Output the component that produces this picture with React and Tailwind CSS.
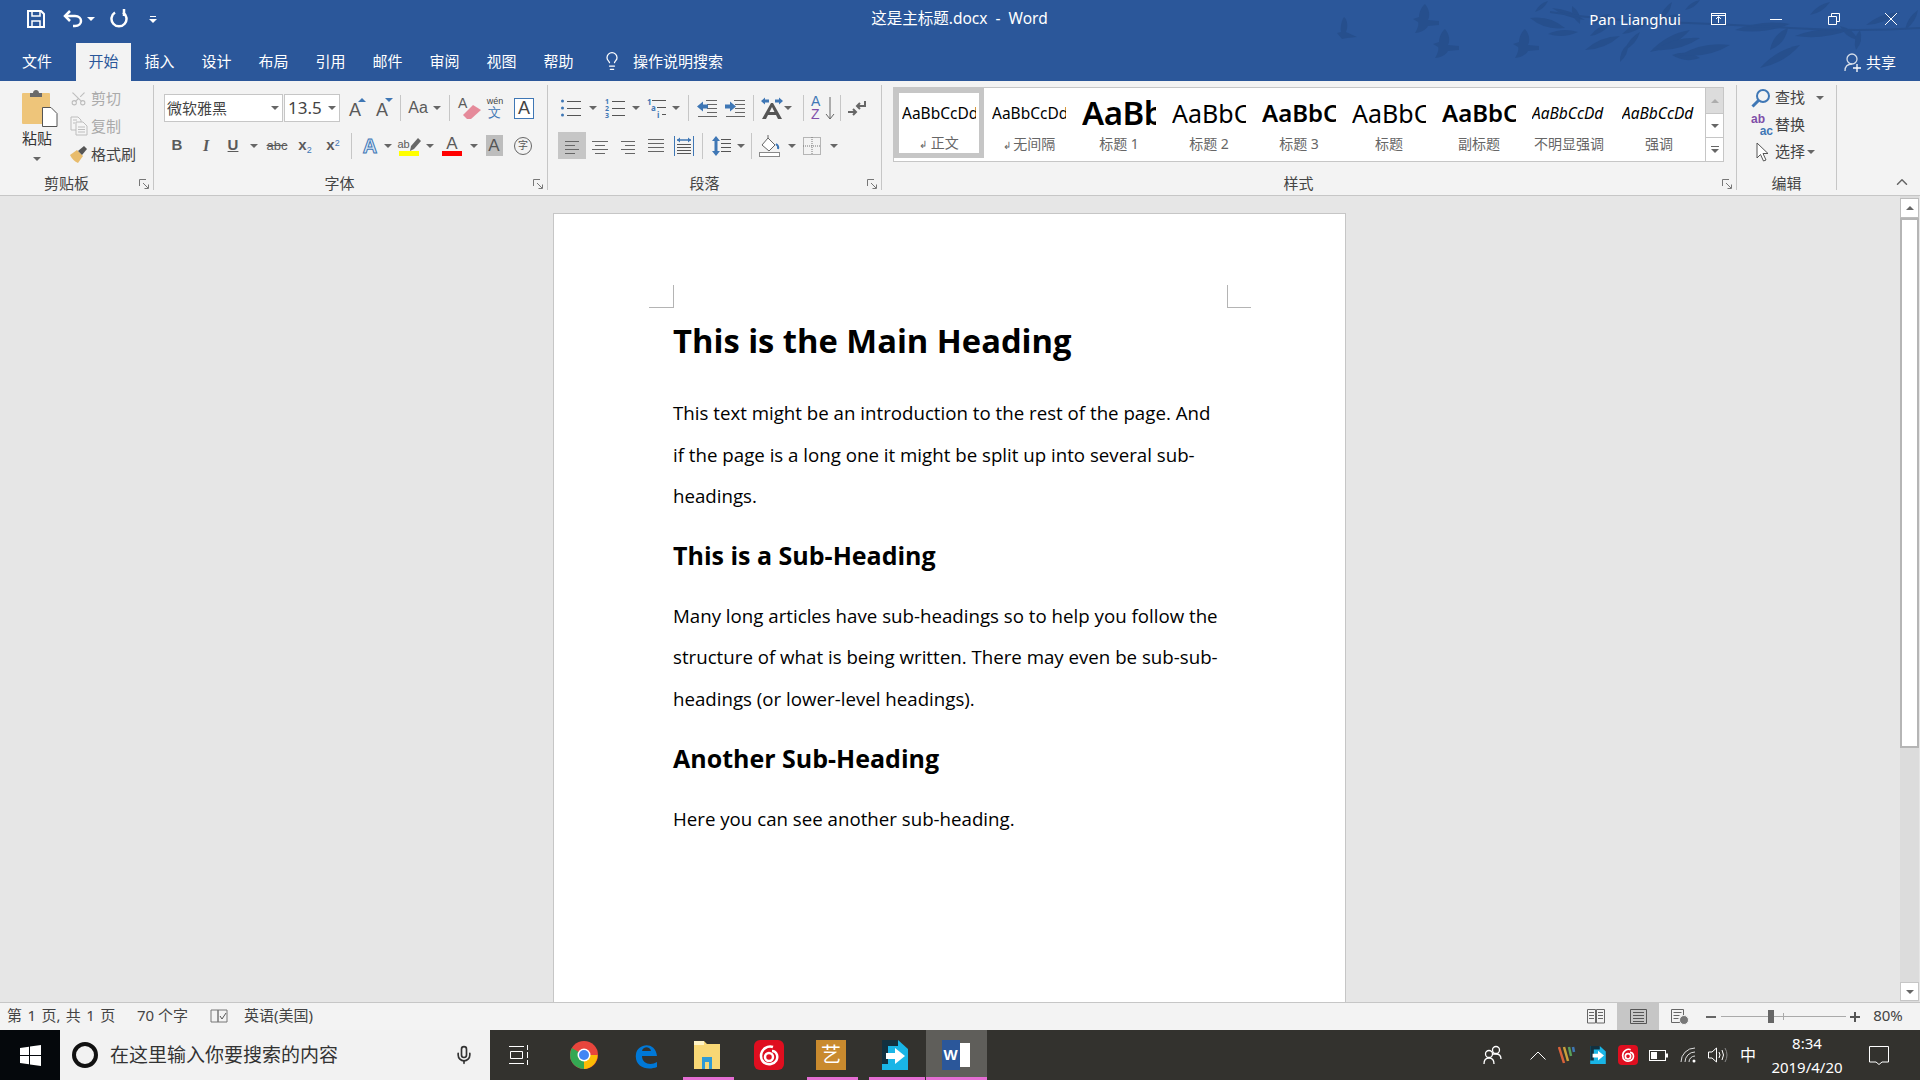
import clsx from 'clsx'
import { Scissors, Mic, ChevronUp, Lightbulb } from 'lucide-react'

const TABS = ['插入', '设计', '布局', '引用', '邮件', '审阅', '视图', '帮助']

const STYLES = [
  { label: '无间隔', mark: true, cls: 'text-[15.5px]' },
  { label: '标题 1', cls: 'text-[33px] font-semibold tracking-[-0.5px]' },
  { label: '标题 2', cls: 'text-[25px]' },
  { label: '标题 3', cls: 'text-[24px] font-semibold' },
  { label: '标题', cls: 'text-[25px]' },
  { label: '副标题', cls: 'text-[24px] font-semibold' },
  { label: '不明显强调', cls: 'text-[15.5px] italic text-[#666]' },
  { label: '强调', cls: 'text-[15.5px] italic' },
]

const LEAVES = [
  [1530, 18, 1565, 28, 8], [1535, 12, 1548, 1, 4], [1552, 8, 1585, 20, 5], [1572, 6, 1580, 24, 6],
  [1610, 24, 1590, 36, 5], [1578, 32, 1548, 34, 6], [1590, 24, 1610, 14, 5], [1620, 36, 1585, 50, 7],
  [1622, 34, 1650, 20, 6], [1640, 32, 1625, 50, 5], [1652, 26, 1680, 14, 6], [1660, 20, 1672, 2, 5],
  [1685, 10, 1700, 0, 4], [1690, 30, 1650, 52, 8], [1700, 38, 1655, 50, 8], [1628, 44, 1620, 62, 5],
  [1735, 30, 1790, 24, 8], [1788, 28, 1770, 50, 8], [1795, 36, 1850, 30, 7], [1800, 45, 1760, 68, 8],
  [1810, 15, 1830, 2, 5], [1840, 26, 1858, 40, 6], [1866, 25, 1900, 12, 6], [1860, 30, 1856, 50, 6],
  [1700, 58, 1672, 55, 7], [1730, 45, 1680, 55, 9], [1905, 30, 1918, 10, 5],
]

function leafPath([x1, y1, x2, y2, w]) {
  const mx = (x1 + x2) / 2
  const my = (y1 + y2) / 2
  const dx = x2 - x1
  const dy = y2 - y1
  const len = Math.hypot(dx, dy)
  const nx = (-dy / len) * w
  const ny = (dx / len) * w
  return `M${x1} ${y1}Q${mx + nx} ${my + ny} ${x2} ${y2}Q${mx - nx} ${my - ny} ${x1} ${y1}Z`
}

function Bird({ x, y }) {
  return (
    <path
      transform={`translate(${x} ${y})`}
      d="M12 0C17 6 17 12 15 16L26 17L26 21L15 22C13 26 7 29 2 29C5 24 6 20 5 18L0 15L6 13C6 8 9 2 12 0Z"
    />
  )
}

function Caret({ className, light }) {
  return (
    <span
      className={clsx(
        'inline-block h-0 w-0 shrink-0 border-x-[4px] border-t-[4px] border-x-transparent',
        light ? 'border-t-white' : 'border-t-[#666]',
        className,
      )}
    />
  )
}

function Cell({ className, children }) {
  return <div className={clsx('flex h-full shrink-0 items-center justify-center', className)}>{children}</div>
}

function Sep({ className }) {
  return <div className={clsx('h-[26px] w-px shrink-0 self-center bg-[#c6c6c6]', className)} />
}

function Launcher() {
  return (
    <svg className="absolute bottom-[1px] right-[4px]" width="10" height="10" viewBox="0 0 10 10" fill="none" stroke="#777">
      <path d="M0.5 7V0.5H7" />
      <path d="M4 4L9 9M5.5 9.5H9.5V5.5" />
    </svg>
  )
}

function GroupLabel({ className, children }) {
  return <div className={clsx('mt-auto text-center text-[15px] leading-[14px] text-[#444]', className)}>{children}</div>
}

function Lines({ rows, width = 22, aligned = 'left' }) {
  return (
    <svg width={width} height="16" viewBox={`0 0 ${width} 16`} stroke="#666">
      {rows.map(([w, y], i) => {
        const x = aligned === 'center' ? (width - w) / 2 : aligned === 'right' ? width - w : 0
        return <line key={i} x1={x} x2={x + w} y1={y + 0.5} y2={y + 0.5} />
      })}
    </svg>
  )
}

function BulletList() {
  return (
    <svg width="22" height="20" viewBox="0 0 22 20" stroke="#555">
      <path d="M6 3.5H20M6 10.5H20M6 17.5H20" />
      <circle cx="1.5" cy="3" r="1.5" fill="#3f77b5" stroke="none" />
      <circle cx="1.5" cy="10" r="1.5" fill="#3f77b5" stroke="none" />
      <circle cx="1.5" cy="17" r="1.5" fill="#3f77b5" stroke="none" />
    </svg>
  )
}

function NumList() {
  return (
    <div className="relative h-[20px] w-[20px] text-[7px] leading-[7px] font-bold text-[#3f77b5]">
      <svg className="absolute inset-0" width="20" height="20" viewBox="0 0 20 20" stroke="#555">
        <path d="M7 3.5H20M7 10.5H20M7 17.5H20" />
      </svg>
      <span className="absolute left-0 top-0">1</span>
      <span className="absolute left-0 top-[7px]">2</span>
      <span className="absolute left-0 top-[14px]">3</span>
    </div>
  )
}

function MultiList() {
  return (
    <div className="relative h-[20px] w-[20px] text-[8px] leading-[8px] font-bold text-[#3f77b5]">
      <svg className="absolute inset-0" width="20" height="20" viewBox="0 0 20 20" stroke="#555">
        <path d="M5 2.5H19M10 9.5H19M15 16.5H19" />
      </svg>
      <span className="absolute left-0 top-0">1</span>
      <span className="absolute left-[4px] top-[6px]">a</span>
      <span className="absolute left-[10px] top-[13px]">i</span>
    </div>
  )
}

function IndentIcon({ out }) {
  return (
    <svg width="20" height="18" viewBox="0 0 20 18">
      <path d="M9 1.5H20M10 5.5H20M10 9.5H20M10 13.5H20M1 17.5H20" stroke="#666" fill="none" />
      <path d={out ? 'M0 7.5L6 2.5V5.5H11V9.5H6V12.5Z' : 'M11 7.5L5 2.5V5.5H0V9.5H5V12.5Z'} fill="#3f77b5" />
    </svg>
  )
}

function PasteIcon() {
  return (
    <svg width="36" height="38" viewBox="0 0 36 38">
      <rect x="0" y="4" width="28" height="31" rx="1" fill="#eec57a" />
      <path d="M8 8V4H11C11 0 17 0 17 4H20V8Z" fill="#6a6a6a" />
      <path d="M20.5 18.5H29L35 24.5V37.5H20.5Z" fill="#fff" stroke="#555" />
    </svg>
  )
}

function CopyIcon() {
  return (
    <svg width="18" height="20" viewBox="0 0 18 20" fill="#f5f5f5" stroke="#bdbdbd">
      <path d="M1 1H8L11 4V14H1Z" />
      <path d="M6 6H13L17 10V19H6Z" />
      <path d="M8 11H15M8 13.5H15M8 16H15M3 4H7M3 7H5" />
    </svg>
  )
}

function BrushIcon() {
  return (
    <svg width="18" height="18" viewBox="0 0 18 18">
      <path d="M0 10L7 5L13 11L8 18Q3 16 0 10Z" fill="#e8bc6c" />
      <path d="M8 6L14 1L17 4L12 10Z" fill="#555" />
    </svg>
  )
}

function LetterA({ children, className }) {
  return <span className={clsx("font-['Liberation_Sans',sans-serif] text-[#5a5a5a]", className)}>{children}</span>
}

function GrowShrink({ up }) {
  return (
    <div className="relative h-[22px] w-[22px] text-center">
      <LetterA className="text-[18px] leading-[26px]">A</LetterA>
      <svg className="absolute right-0 top-0" width="8" height="6" viewBox="0 0 8 6" fill="#3f77b5">
        <path d={up ? 'M0 5L4 1L8 5Z' : 'M0 1H8L4 5Z'} />
      </svg>
    </div>
  )
}

function LayoutIcon() {
  return (
    <svg width="24" height="24" viewBox="0 0 24 24">
      <path d="M1 5L5 1.5V3.5H9V6.5H5V8.5ZM23 5L19 1.5V3.5H15V6.5H19V8.5Z" fill="#3f77b5" />
      <path d="M2 23L11 7H13L22 23H18L16 19H8L6 23ZM9.5 16H14.5L12 11Z" fill="#555" />
    </svg>
  )
}

function SortIcon() {
  return (
    <div className="relative h-[26px] w-[24px] font-['Liberation_Sans',sans-serif] text-[14px] leading-[13px]">
      <span className="absolute left-0 top-0 text-[#3f77b5]">A</span>
      <span className="absolute left-0 top-[13px] text-[#7f4ea8]">Z</span>
      <svg className="absolute right-0 top-0" width="10" height="26" viewBox="0 0 10 26" fill="none" stroke="#666">
        <path d="M5 2V24M1 19L5 24L9 19" />
      </svg>
    </div>
  )
}

function PilcrowIcon() {
  return (
    <svg width="18" height="18" viewBox="0 0 18 18" fill="none" stroke="#666" strokeWidth="2">
      <path d="M17 2V7H9M12 4L9 7L12 10" />
      <path d="M0 13H8M5 10L8 13L5 16" />
    </svg>
  )
}

function DistributeIcon() {
  return (
    <svg width="20" height="20" viewBox="0 0 20 20">
      <path d="M0.5 0V20M19.5 0V20" stroke="#3f77b5" />
      <path d="M3 4H17" stroke="#3f77b5" strokeWidth="1.5" />
      <path d="M3 4L6 1.5V6.5ZM17 4L14 1.5V6.5Z" fill="#3f77b5" />
      <path d="M3 8.5H17M3 11.5H17M3 14.5H17M3 17.5H17" stroke="#555" />
    </svg>
  )
}

function LineSpacingIcon() {
  return (
    <svg width="20" height="20" viewBox="0 0 20 20">
      <path d="M4 0L8 5H5.5V15H8L4 20L0 15H2.5V5H0Z" fill="#3f77b5" />
      <path d="M9 3.5H19M9 7.5H19M9 11.5H19M9 15.5H19" stroke="#555" />
    </svg>
  )
}

function ShadingIcon() {
  return (
    <svg width="22" height="22" viewBox="0 0 22 22" fill="none">
      <path d="M3 10L9 3L16 10L10 16Z" stroke="#666" fill="#fff" />
      <path d="M9 3V0" stroke="#666" />
      <path d="M17 9Q20 11 19 14" stroke="#3f77b5" strokeWidth="2" />
      <rect x="0.5" y="17.5" width="20" height="4" fill="#fff" stroke="#888" />
    </svg>
  )
}

function BorderIcon() {
  return (
    <svg width="18" height="18" viewBox="0 0 18 18" fill="none" stroke="#777" strokeDasharray="1 1">
      <rect x="0.5" y="0.5" width="17" height="17" />
      <path d="M9 0V18M0 9H18" />
    </svg>
  )
}

function EraserIcon() {
  return (
    <div className="relative h-[24px] w-[24px]">
      <LetterA className="absolute left-0 top-[-3px] text-[14px]">A</LetterA>
      <svg className="absolute bottom-0 right-0" width="20" height="16" viewBox="0 0 20 16">
        <path d="M1 11L11 1L19 6L9 15H5Z" fill="#e58a9a" />
      </svg>
    </div>
  )
}

function PointerIcon() {
  return (
    <svg width="14" height="20" viewBox="0 0 14 20" fill="#fff" stroke="#555">
      <path d="M1 1V16L4.5 12.5L7.5 19L10 18L7 11.5H12Z" />
    </svg>
  )
}

function Ribbon() {
  return (
    <div className="relative flex h-[115px] shrink-0 border-b border-[#c6c6c6] bg-[#f3f3f3] pt-[4px] text-[#444]">
      {/* 剪贴板 */}
      <div className="relative flex h-[105px] w-[154px] shrink-0 flex-col border-r border-[#c6c6c6]">
        <div className="flex">
          <div className="flex w-[70px] shrink-0 flex-col items-center pl-[4px] pt-[4px]">
            <div className="ml-[6px]"><PasteIcon /></div>
            <span className="mt-[1px] text-[15px] leading-[20px] text-[#333]">粘贴</span>
            <Caret className="mt-[9px]" />
          </div>
          <div className="-mt-[1px] flex flex-col">
            <div className="flex h-[28px] items-center text-[15px] text-[#aaa]">
              <span className="flex w-[21px] items-center">
                <Scissors size={17} className="-rotate-90 text-[#bdbdbd]" strokeWidth={1.5} />
              </span>
              剪切
            </div>
            <div className="flex h-[28px] items-center text-[15px] text-[#aaa]">
              <span className="flex w-[21px] items-center"><CopyIcon /></span>
              复制
            </div>
            <div className="flex h-[28px] items-center text-[15px] text-[#444]">
              <span className="flex w-[21px] items-center"><BrushIcon /></span>
              格式刷
            </div>
          </div>
        </div>
        <GroupLabel className="pr-[20px]">剪贴板</GroupLabel>
        <Launcher />
      </div>

      {/* 字体 */}
      <div className="relative flex h-[105px] w-[394px] shrink-0 flex-col border-r border-[#c6c6c6] pt-[9px]">
        <div className="flex h-[28px] pl-[10px]">
          <div className="flex w-[119px] shrink-0 items-center justify-between border border-[#c6c6c6] bg-white pl-[2px] pr-[3px] text-[15px] text-[#444]">
            微软雅黑
            <Caret />
          </div>
          <div className="ml-[1px] flex w-[56px] shrink-0 items-center justify-between border border-[#c6c6c6] bg-white pl-[3px] pr-[3px] text-[17px] text-[#444]">
            13.5
            <Caret />
          </div>
          <Cell className="w-[30px]"><GrowShrink up /></Cell>
          <Cell className="w-[24px]"><GrowShrink /></Cell>
          <Sep className="ml-[6px]" />
          <Cell className="ml-[2px] w-[30px]"><LetterA className="text-[16px]">Aa</LetterA></Cell>
          <Cell className="w-[8px]"><Caret /></Cell>
          <Sep className="ml-[8px]" />
          <Cell className="ml-[2px] w-[36px]"><EraserIcon /></Cell>
          <Cell className="-ml-[2px] w-[18px]">
            <div className="flex flex-col items-center font-['Liberation_Sans',sans-serif] leading-none">
              <span className="text-[9px] text-[#444]">wén</span>
              <span className="text-[13px] text-[#3f77b5]">文</span>
            </div>
          </Cell>
          <Cell className="w-[40px]">
            <div className="flex h-[21px] w-[20px] items-center justify-center border border-[#3f77b5] bg-white">
              <LetterA className="text-[18px] text-[#444]">A</LetterA>
            </div>
          </Cell>
        </div>
        <div className="mt-[10px] flex h-[27px] pl-[9px]">
          <Cell className="w-[28px]"><LetterA className="text-[15px] font-bold">B</LetterA></Cell>
          <Cell className="w-[30px]"><span className="font-['Liberation_Serif',serif] text-[16px] font-bold italic text-[#5a5a5a]">I</span></Cell>
          <Cell className="w-[24px]"><LetterA className="text-[15px] font-bold underline">U</LetterA></Cell>
          <Cell className="w-[18px]"><Caret /></Cell>
          <Cell className="w-[28px]"><LetterA className="text-[13px] line-through">abc</LetterA></Cell>
          <Cell className="w-[28px]"><LetterA className="text-[15px] font-bold">x<sub className="text-[9px] font-normal text-[#3f77b5]">2</sub></LetterA></Cell>
          <Cell className="w-[28px]"><LetterA className="text-[15px] font-bold">x<sup className="text-[9px] font-normal text-[#3f77b5]">2</sup></LetterA></Cell>
          <Sep className="ml-[4px] mr-[3px]" />
          <Cell className="w-[30px]"><span className="font-['Liberation_Sans',sans-serif] text-[20px] font-bold text-[#dceaf7] [-webkit-text-stroke:1px_#3f77b5]">A</span></Cell>
          <Cell className="w-[6px]"><Caret /></Cell>
          <Cell className="w-[36px]">
            <div className="flex flex-col items-center">
              <div className="flex h-[16px] items-end">
                <LetterA className="text-[11px] leading-[14px]">ab</LetterA>
                <svg width="11" height="13" viewBox="0 0 11 13" fill="#666"><path d="M8 0L11 3L4 11L0 13L1 8Z" /></svg>
              </div>
              <span className="h-[5px] w-[20px] bg-[#ffff00]" />
            </div>
          </Cell>
          <Cell className="w-[6px]"><Caret /></Cell>
          <Cell className="w-[38px]">
            <div className="flex flex-col items-center">
              <LetterA className="text-[17px] leading-[15px]">A</LetterA>
              <span className="h-[5px] w-[20px] bg-[#ff0000]" />
            </div>
          </Cell>
          <Cell className="w-[6px]"><Caret /></Cell>
          <Cell className="w-[34px]">
            <div className="flex h-[21px] w-[17px] items-center justify-center bg-[#bdbdbd]">
              <LetterA className="text-[17px] text-[#555]">A</LetterA>
            </div>
          </Cell>
          <Cell className="w-[24px]">
            <div className="flex h-[18px] w-[18px] items-center justify-center rounded-full border border-[#666] text-[10px] text-[#555]">字</div>
          </Cell>
        </div>
        <GroupLabel className="pr-[22px]">字体</GroupLabel>
        <Launcher />
      </div>

      {/* 段落 */}
      <div className="relative flex h-[105px] w-[334px] shrink-0 flex-col border-r border-[#c6c6c6] pt-[9px]">
        <div className="flex h-[28px] pl-[10px]">
          <Cell className="w-[28px]"><BulletList /></Cell>
          <Cell className="w-[14px]"><Caret /></Cell>
          <Cell className="w-[30px]"><NumList /></Cell>
          <Cell className="w-[12px]"><Caret /></Cell>
          <Cell className="w-[30px]"><MultiList /></Cell>
          <Cell className="w-[8px]"><Caret /></Cell>
          <Sep className="ml-[8px]" />
          <Cell className="w-[36px]"><IndentIcon out /></Cell>
          <Cell className="w-[20px]"><IndentIcon /></Cell>
          <Sep className="ml-[8px]" />
          <Cell className="ml-[6px] w-[24px]"><LayoutIcon /></Cell>
          <Cell className="w-[8px]"><Caret /></Cell>
          <Sep className="ml-[11px]" />
          <Cell className="ml-[1px] w-[36px]"><SortIcon /></Cell>
          <Sep className="-ml-[1px]" />
          <Cell className="w-[32px]"><PilcrowIcon /></Cell>
        </div>
        <div className="mt-[10px] flex h-[27px] pl-[10px]">
          <Cell className="w-[28px] bg-[#c6c6c6]"><Lines width={14} rows={[[14, 3], [10, 7], [14, 11], [10, 15]]} /></Cell>
          <Cell className="w-[28px]"><Lines width={16} aligned="center" rows={[[16, 3], [10, 7], [16, 11], [10, 15]]} /></Cell>
          <Cell className="w-[28px]"><Lines width={14} aligned="right" rows={[[14, 3], [10, 7], [14, 11], [10, 15]]} /></Cell>
          <Cell className="w-[28px]"><Lines width={16} rows={[[16, 1], [16, 5], [16, 9], [16, 13]]} /></Cell>
          <Cell className="w-[28px]"><DistributeIcon /></Cell>
          <Sep className="ml-[4px]" />
          <Cell className="ml-[4px] w-[30px]"><LineSpacingIcon /></Cell>
          <Cell className="w-[8px]"><Caret /></Cell>
          <Sep className="ml-[6px]" />
          <Cell className="w-[36px]"><ShadingIcon /></Cell>
          <Cell className="w-[8px]"><Caret /></Cell>
          <Cell className="w-[32px]"><BorderIcon /></Cell>
          <Cell className="ml-[2px] w-[8px]"><Caret /></Cell>
        </div>
        <GroupLabel className="pr-[20px]">段落</GroupLabel>
        <Launcher />
      </div>

      {/* 样式 */}
      <div className="relative flex h-[105px] w-[855px] shrink-0 flex-col border-r border-[#c6c6c6] pl-[11px]">
        <div className="mt-[2px] flex h-[75px] w-[831px] border border-[#c6c6c6] bg-white">
          <div className="flex h-[70px] w-[90px] shrink-0 flex-col items-center border-[5px] border-[#c6c6c6] pt-[1px]">
            <div className="h-[41px] w-[74px] overflow-hidden whitespace-nowrap text-center text-[15.5px] leading-[38px] text-black">AaBbCcDd</div>
            <div className="text-[14px] leading-[18px] text-[#666]"><span className="text-[10px]">↲</span> 正文</div>
          </div>
          {STYLES.map((s) => (
            <div key={s.label} className="flex h-[70px] w-[90px] shrink-0 flex-col items-center pt-[6px]">
              <div className={clsx('h-[41px] w-[74px] overflow-hidden whitespace-nowrap text-left leading-[38px] text-black', s.cls)}>AaBbCcDd</div>
              <div className="text-[14px] leading-[18px] text-[#666]">
                {s.mark && <span className="text-[10px]">↲ </span>}
                {s.label}
              </div>
            </div>
          ))}
          <div className="ml-auto flex w-[18px] shrink-0 flex-col border-l border-[#c6c6c6]">
            <div className="flex h-[26px] items-center justify-center border-b border-[#c6c6c6] bg-[#dcdcdc]">
              <Caret className="rotate-180 opacity-40" />
            </div>
            <div className="flex h-[24px] items-center justify-center border-b border-[#c6c6c6]"><Caret /></div>
            <div className="flex flex-1 flex-col items-center justify-center gap-[2px]">
              <span className="h-px w-[8px] bg-[#666]" />
              <Caret />
            </div>
          </div>
        </div>
        <GroupLabel className="pr-[32px]">样式</GroupLabel>
        <Launcher />
      </div>

      {/* 编辑 */}
      <div className="relative flex h-[105px] w-[100px] shrink-0 flex-col border-r border-[#c6c6c6] pl-[14px]">
        <div className="-mt-[1px] flex h-[27px] items-center text-[15px]">
          <span className="flex w-[24px] items-center">
            <svg width="20" height="20" viewBox="0 0 20 20" fill="none" stroke="#3f77b5" strokeWidth="2">
              <circle cx="12" cy="8" r="6" />
              <path d="M7.5 12.5L1.5 18.5" strokeWidth="3" />
            </svg>
          </span>
          查找
          <Caret className="ml-[11px]" />
        </div>
        <div className="flex h-[27px] items-center text-[15px]">
          <span className="relative flex h-[24px] w-[24px] font-['Liberation_Sans',sans-serif] text-[12px] font-bold leading-[12px]">
            <span className="absolute left-0 top-0 text-[#7f4ea8]">ab</span>
            <span className="absolute bottom-0 right-[2px] text-[#3f77b5]">ac</span>
          </span>
          替换
        </div>
        <div className="flex h-[27px] items-center text-[15px]">
          <span className="flex w-[24px] items-center pl-[5px]"><PointerIcon /></span>
          选择
          <Caret className="ml-[2px]" />
        </div>
        <GroupLabel className="pr-[14px]">编辑</GroupLabel>
      </div>

      <div className="flex flex-1 items-end justify-end pb-[4px] pr-[9px]">
        <ChevronUp size={18} className="text-[#666]" />
      </div>
    </div>
  )
}

function TitleBar() {
  return (
    <div className="relative h-[81px] shrink-0 overflow-hidden bg-[#2b579a] text-white">
      <svg className="pointer-events-none absolute inset-0" width="1920" height="81" viewBox="0 0 1920 81" fill="#264f8d">
        <path d="M1344 17C1348 20 1348 28 1346 32L1357 37L1347 38L1342 39L1337 33L1341 32C1340 26 1342 20 1344 17Z" />
        <Bird x={1413} y={4} />
        <Bird x={1433} y={29} />
        <Bird x={1513} y={29} />
        {LEAVES.map((l, i) => <path key={i} d={leafPath(l)} />)}
        <path d="M1550 12Q1600 20 1660 22T1790 28T1920 28" fill="none" stroke="#264f8d" strokeWidth="2" />
      </svg>

      <div className="relative grid h-[43px] grid-cols-[1fr_auto_1fr] items-center pb-[5px]">
        <div className="flex items-center pl-[27px]">
          <svg width="18" height="18" viewBox="0 0 18 18" fill="none" stroke="#fff" strokeWidth="2">
            <path d="M1 1H14L17 4V17H1Z" />
            <path d="M5 1V6H13V1M5 17V11H13V17" strokeWidth="1.5" />
          </svg>
          <svg className="ml-[18px]" width="20" height="18" viewBox="0 0 20 18" fill="none" stroke="#fff" strokeWidth="2.5">
            <path d="M7 1L2 6L7 11" />
            <path d="M2 6H12C20 6 20 16 12 16H10" />
          </svg>
          <Caret light className="ml-[4px]" />
          <svg className="ml-[15px]" width="18" height="20" viewBox="0 0 18 20" fill="none" stroke="#fff" strokeWidth="2.5">
            <path d="M5 3.5A7.5 7.5 0 1 0 13 3.5" />
            <path d="M14 0V7" />
          </svg>
          <div className="ml-[21px] flex flex-col items-center gap-[2px]">
            <span className="h-px w-[6px] bg-white" />
            <Caret light className="border-x-[3px]" />
          </div>
        </div>
        <div className="-ml-[1px] text-[15.5px]">这是主标题.docx&nbsp; - &nbsp;Word</div>
        <div className="flex items-center justify-end">
          <span className="text-[15px]">Pan Lianghui</span>
          <svg className="ml-[30px]" width="15" height="12" viewBox="0 0 15 12" fill="none" stroke="#fff">
            <rect x="0.5" y="0.5" width="14" height="11" />
            <path d="M0 2.5H15M7.5 10V4M5 6L7.5 3.5L10 6" />
          </svg>
          <span className="ml-[44px] h-px w-[12px] bg-white" />
          <svg className="ml-[46px]" width="12" height="12" viewBox="0 0 12 12" fill="none" stroke="#fff">
            <path d="M0.5 3.5H8.5V11.5H0.5Z" />
            <path d="M3.5 3V0.5H11.5V8.5H9" />
          </svg>
          <svg className="ml-[45px] mr-[23px]" width="12" height="12" viewBox="0 0 12 12" stroke="#fff">
            <path d="M0 0L12 12M12 0L0 12" />
          </svg>
        </div>
      </div>

      <div className="relative flex h-[38px] items-stretch text-[15px]">
        <div className="flex w-[76px] items-center justify-center pb-[2px] pr-[2px]">文件</div>
        <div className="flex w-[55px] items-center justify-center bg-[#f3f3f3] pb-[2px] text-[#2b579a]">开始</div>
        {TABS.map((t) => (
          <div key={t} className="flex w-[57px] items-center justify-center pb-[2px]">{t}</div>
        ))}
        <div className="ml-[15px] flex items-center pb-[2px]">
          <Lightbulb size={20} strokeWidth={1.5} />
          <span className="ml-[11px] text-[15px]">操作说明搜索</span>
        </div>
        <div className="ml-auto flex items-center pr-[24px]">
          <svg width="18" height="19" viewBox="0 0 18 19" fill="none" stroke="#d5dde9" strokeWidth="1.3">
            <circle cx="8" cy="6" r="5" />
            <path d="M1 18C1 13 4 11 8 11" />
            <path d="M9 15H17M13 11V19" stroke="#fff" />
          </svg>
          <span className="ml-[4px]">共享</span>
        </div>
      </div>
    </div>
  )
}

function Document() {
  return (
    <div className="flex min-h-0 flex-1 bg-[#e6e6e6]">
      <div className="min-w-0 flex-1 overflow-hidden pl-[553px] pt-[17px]">
        <div className="h-[900px] w-[793px] border border-[#c6c6c6] bg-white pl-[95px] pr-[94px] pt-[71px] font-['Open_Sans','Noto_Sans_CJK_SC',sans-serif] text-black">
          <div className="flex h-[23px] justify-between">
            <div className="w-[25px] border-b border-r border-[#b4b4b4]" />
            <div className="w-[24px] border-b border-l border-[#b4b4b4]" />
          </div>
          <div className="pl-[24px]">
            <h1 className="mt-[13px] text-[32.7px] font-bold leading-[40px]">This is the Main Heading</h1>
            <p className="mt-[31px] text-[18.7px] leading-[41.5px]">
              This text might be an introduction to the rest of the page. And<br />
              if the page is a long one it might be split up into several sub-<br />
              headings.
            </p>
            <h2 className="mt-[23px] text-[25px] font-bold leading-[30px]">This is a Sub-Heading</h2>
            <p className="mt-[25px] text-[18.7px] leading-[41.5px]">
              Many long articles have sub-headings so to help you follow the<br />
              structure of what is being written. There may even be sub-sub-<br />
              headings (or lower-level headings).
            </p>
            <h2 className="mt-[24px] text-[25px] font-bold leading-[30px]">Another Sub-Heading</h2>
            <p className="mt-[25px] text-[18.7px] leading-[41.5px]">Here you can see another sub-heading.</p>
          </div>
        </div>
      </div>
      <div className="mr-px flex w-[19px] shrink-0 flex-col bg-[#dcdcdc] pt-[2px]">
        <div className="flex h-[20px] items-center justify-center border border-[#bdbdbd] bg-white">
          <Caret className="rotate-180" />
        </div>
        <div className="h-[530px] border-2 border-[#b5b5b5] bg-white" />
        <div className="mt-auto mb-[1px] flex h-[19px] items-center justify-center border border-[#c6c6c6] bg-white">
          <Caret />
        </div>
      </div>
    </div>
  )
}

function StatusBar() {
  return (
    <div className="flex h-[28px] shrink-0 items-center border-t border-[#c6c6c6] bg-[#f3f3f3] pl-[7px] text-[15px] text-[#444]">
      <span className="w-[130px] pb-[2px] [word-spacing:1.5px]">第 1 页, 共 1 页</span>
      <span className="w-[73px] pb-[2px]">70 个字</span>
      <svg width="18" height="16" viewBox="0 0 18 16" fill="none" stroke="#777">
        <path d="M1 1H8V13H1ZM8 1H17V13H8Z" />
        <path d="M10 7L12 10L16 4" stroke="#555" />
      </svg>
      <span className="ml-[16px] pb-[2px]">英语(美国)</span>
      <div className="ml-auto flex h-full items-center">
        <Cell className="w-[42px]">
          <svg width="18" height="15" viewBox="0 0 18 15" fill="none" stroke="#666">
            <path d="M0.5 0.5H8.5V14H0.5ZM9.5 0.5H17.5V14H9.5ZM2 3.5H7M2 6.5H7M2 9.5H7M11 3.5H16M11 6.5H16M11 9.5H16" />
          </svg>
        </Cell>
        <Cell className="w-[42px] bg-[#c6c6c6]">
          <svg width="17" height="15" viewBox="0 0 17 15" fill="none" stroke="#555">
            <path d="M0.5 0.5H16.5V14.5H0.5ZM3 3.5H14M3 6.5H14M3 9.5H14M3 12.5H14" />
          </svg>
        </Cell>
        <Cell className="w-[42px]">
          <svg width="18" height="16" viewBox="0 0 18 16" fill="none" stroke="#666">
            <path d="M0.5 0.5H12.5V13.5H0.5ZM2.5 3.5H10.5M2.5 6.5H8.5M2.5 9.5H7.5" />
            <circle cx="13" cy="11" r="4.5" fill="#777" stroke="#f3f3f3" />
          </svg>
        </Cell>
        <Cell className="w-[20px]"><span className="h-[2px] w-[10px] bg-[#666]" /></Cell>
        <div className="relative h-[13px] w-[125px] shrink-0">
          <span className="absolute inset-x-0 top-[6px] h-px bg-[#aaa]" />
          <span className="absolute left-[62px] top-[3px] h-[7px] w-px bg-[#aaa]" />
          <span className="absolute left-[47px] top-0 h-[13px] w-[6px] bg-[#666]" />
        </div>
        <Cell className="w-[18px]">
          <svg width="10" height="10" viewBox="0 0 10 10" stroke="#555" strokeWidth="2"><path d="M0 5H10M5 0V10" /></svg>
        </Cell>
        <span className="w-[56px] pb-[2px] pr-[8px] text-center text-[15px]">80%</span>
      </div>
    </div>
  )
}

function TaskApp({ className, bar, children }) {
  return (
    <div className={clsx('relative flex h-full shrink-0 items-center justify-center', className)}>
      {children}
      {bar && <span className={clsx('absolute bottom-0 h-[3px] bg-[#e46dd3]', bar)} />}
    </div>
  )
}

function ChromeIcon() {
  return (
    <svg width="28" height="28" viewBox="0 0 28 28">
      <circle cx="14" cy="14" r="14" fill="#e8453c" />
      <path d="M14 14L1.9 7A14 14 0 0 0 14 28L21 14Z" fill="#34a853" />
      <path d="M14 14H27.5A14 14 0 0 1 14 28Z" fill="#fbbc05" />
      <circle cx="14" cy="14" r="6.5" fill="#fff" />
      <circle cx="14" cy="14" r="5" fill="#4285f4" />
    </svg>
  )
}

function EdgeIcon() {
  return (
    <svg width="26" height="28" viewBox="0 0 26 28" fill="none">
      <path d="M3 13C4 3 22 -1 24 15H9C9 23 18 25 24 21V26C14 30 1 26 3 13ZM9 10H18C17 5 10 5 9 10Z" fill="#0078d7" />
    </svg>
  )
}

function FolderIcon() {
  return (
    <svg width="28" height="30" viewBox="0 0 28 30">
      <path d="M1 1H11L14 4H27V29H1Z" fill="#f8d775" />
      <path d="M1 1H11V5H1Z" fill="#fff3c4" />
      <rect x="9" y="17" width="10" height="12" fill="#2f9bd6" />
      <rect x="12" y="22" width="4" height="7" fill="#f8d775" />
    </svg>
  )
}

function NeteaseIcon({ size = 30 }) {
  return (
    <svg width={size} height={size} viewBox="0 0 30 30" fill="none">
      <rect width="30" height="30" rx="6" fill="#df0e1f" />
      <circle cx="15" cy="17" r="4" stroke="#fff" strokeWidth="2.5" />
      <path d="M19 7C14 5 7 9 7 16C7 22 12 25 17 24C22 23 24 19 23 15C22 12 20 11 18 11" stroke="#fff" strokeWidth="2.5" />
    </svg>
  )
}

function SendIcon({ size = 30 }) {
  return (
    <svg width={size} height={size} viewBox="0 0 30 30">
      <path d="M2 0H18L28 9V30H2Z" fill="#19b5e6" />
      <path d="M2 0H18V6H8V24H2Z" fill="#12303f" />
      <path d="M6 13H15V8L25 16L15 24V19H6Z" fill="#fff" />
    </svg>
  )
}

function Taskbar() {
  return (
    <div className="flex h-[50px] shrink-0 bg-[#33322e] text-white">
      <div className="flex w-[60px] shrink-0 items-center justify-center bg-[#05080c]">
        <svg width="21" height="21" viewBox="0 0 21 21" fill="#fff">
          <path d="M0 3L9 1.7V10H0ZM10 1.5L21 0V10H10ZM0 11H9V19.3L0 18ZM10 11H21V21L10 19.5Z" />
        </svg>
      </div>
      <div className="flex w-[430px] shrink-0 items-center bg-[#f2f2f2] pl-[12px] text-[#333]">
        <span className="h-[26px] w-[26px] rounded-full border-[4px] border-[#111]" />
        <span className="ml-[12px] text-[19px]">在这里输入你要搜索的内容</span>
        <Mic size={20} strokeWidth={2} className="ml-auto mr-[16px] text-[#333]" />
      </div>
      <Cell className="mr-[6px] w-[58px]">
        <svg width="20" height="20" viewBox="0 0 20 20" fill="none" stroke="#fff">
          <path d="M0 1.5H15M0 18.5H15M1.5 6.5H13.5V13.5H1.5Z" />
          <path d="M18.5 0V5M18.5 7V13M18.5 15V20" />
        </svg>
      </Cell>
      <TaskApp className="w-[61px] pr-[2px]"><ChromeIcon /></TaskApp>
      <TaskApp className="w-[61px]"><EdgeIcon /></TaskApp>
      <TaskApp className="w-[61px]" bar="left-[7px] right-[3px]"><FolderIcon /></TaskApp>
      <TaskApp className="w-[61px] pl-[2px]"><NeteaseIcon /></TaskApp>
      <TaskApp className="w-[61px] pl-[5px]" bar="left-[9px] right-[1px]">
        <div className="flex h-[30px] w-[30px] items-center justify-center bg-[#c98a2e] text-[20px] text-white">艺</div>
      </TaskApp>
      <TaskApp className="w-[67px] pl-[4px]" bar="left-[10px] right-[1px]"><SendIcon /></TaskApp>
      <TaskApp className="w-[61px] bg-[#5f5e5a] pr-[2px]" bar="inset-x-0">
        <div className="relative h-[30px] w-[28px]">
          <span className="absolute right-0 top-[3px] h-[24px] w-[22px] bg-white" />
          <span className="absolute left-0 top-0 flex h-[30px] w-[18px] items-center justify-center bg-[#2b579a] font-['Liberation_Sans',sans-serif] text-[15px] font-bold">W</span>
        </div>
      </TaskApp>

      <div className="ml-auto flex h-full items-center pr-[13px]">
        <Cell className="w-[60px]">
          <svg width="20" height="20" viewBox="0 0 20 20" fill="none" stroke="#fff" strokeWidth="1.3">
            <circle cx="13" cy="5" r="3.5" />
            <circle cx="6" cy="9" r="3.5" />
            <path d="M1 19C1 14 3 13 6 13C9 13 11 14 11 19M10 9H13C16 9 18 10 18 14" />
          </svg>
        </Cell>
        <Cell className="w-[30px]">
          <svg width="16" height="9" viewBox="0 0 16 9" fill="none" stroke="#fff"><path d="M0.5 8.5L8 1L15.5 8.5" /></svg>
        </Cell>
        <Cell className="w-[30px]">
          <svg width="20" height="18" viewBox="0 0 20 18" fill="none" strokeWidth="2.5">
            <path d="M1 1L6 17" stroke="#d9623a" />
            <path d="M6 1L10 15" stroke="#c9a13b" />
            <path d="M11 1L13 10" stroke="#5aa05a" />
            <path d="M15 1L16 6" stroke="#3f77b5" />
          </svg>
        </Cell>
        <Cell className="w-[30px]"><SendIcon size={18} /></Cell>
        <Cell className="w-[30px]"><NeteaseIcon size={20} /></Cell>
        <Cell className="w-[30px]">
          <svg width="19" height="11" viewBox="0 0 19 11" fill="none" stroke="#fff">
            <rect x="0.5" y="0.5" width="16" height="10" />
            <rect x="2" y="2" width="6" height="7" fill="#fff" stroke="none" />
            <rect x="17" y="3.5" width="2" height="4" fill="#fff" stroke="none" />
          </svg>
        </Cell>
        <Cell className="w-[30px]">
          <svg width="16" height="16" viewBox="0 0 16 16" fill="none" stroke="#ddd">
            <path d="M1 15A14 14 0 0 1 15 1M5 15A10 10 0 0 1 15 5M9 15A6 6 0 0 1 15 9" />
            <circle cx="14" cy="14" r="1.5" fill="#fff" stroke="none" />
          </svg>
        </Cell>
        <Cell className="w-[30px]">
          <svg width="20" height="16" viewBox="0 0 20 16" fill="none" stroke="#fff">
            <path d="M0.5 5H4L8.5 1V15L4 11H0.5Z" />
            <path d="M11 5Q13 8 11 11M14 3Q17 8 14 13" />
            <path d="M17 1Q21 8 17 15" stroke="#888" />
          </svg>
        </Cell>
        <Cell className="w-[30px] text-[16px]">中</Cell>
        <div className="flex w-[88px] shrink-0 flex-col items-center text-[15px] leading-[24px]">
          <span>8:34</span>
          <span>2019/4/20</span>
        </div>
        <Cell className="w-[56px]">
          <svg width="20" height="19" viewBox="0 0 20 19" fill="none" stroke="#fff">
            <path d="M0.5 0.5H19.5V16H13L10 18.5L7 16H0.5Z" />
          </svg>
        </Cell>
      </div>
    </div>
  )
}

export default function App() {
  return (
    <div className="flex h-[1080px] w-[1920px] flex-col overflow-hidden font-['Noto_Sans','Noto_Sans_CJK_SC',sans-serif]">
      <TitleBar />
      <Ribbon />
      <Document />
      <StatusBar />
      <Taskbar />
    </div>
  )
}
